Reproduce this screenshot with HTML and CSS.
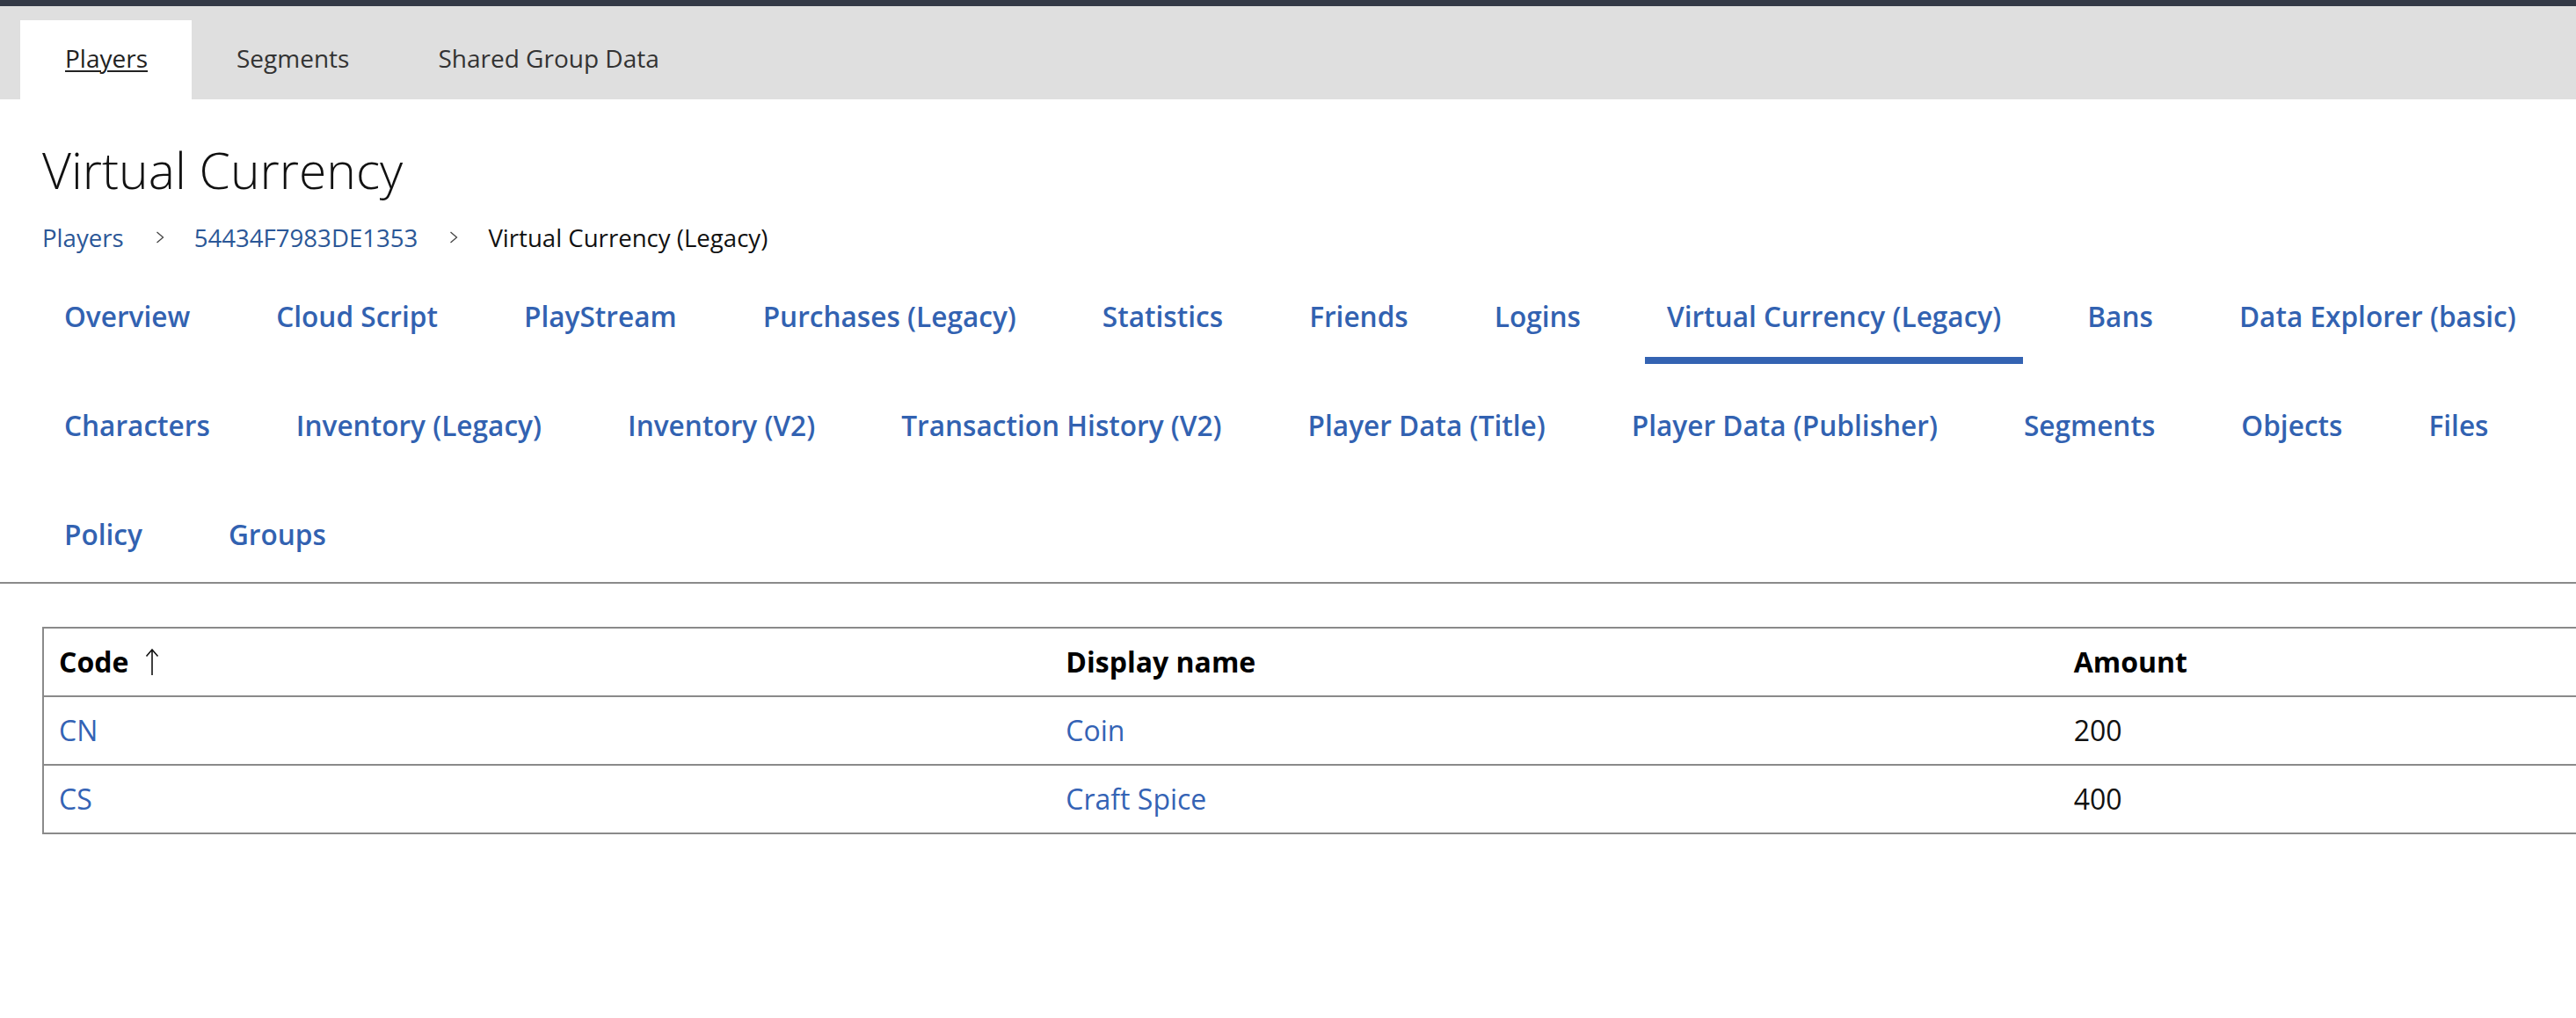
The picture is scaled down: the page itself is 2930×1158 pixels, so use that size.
FILE: index.html
```html
<!DOCTYPE html>
<html lang="en">
<head>
<meta charset="utf-8">
<title>Virtual Currency</title>
<link rel="stylesheet" href="styles.css">
</head>
<body>
  <div class="topbar"></div>
  <nav class="section-tabs">
    <a class="section-tab active" href="#">Players</a>
    <a class="section-tab" href="#">Segments</a>
    <a class="section-tab" href="#">Shared Group Data</a>
  </nav>

  <header class="page-header">
    <h1 class="page-title">Virtual Currency</h1>
    <div class="breadcrumb">
      <a class="crumb-link" href="#">Players</a>
      <svg class="crumb-sep" width="10" height="14" viewBox="0 0 10 14"><polyline points="1.5,1 8.5,7 1.5,13" fill="none" stroke="#444" stroke-width="1.3"/></svg>
      <a class="crumb-link" href="#">54434F7983DE1353</a>
      <svg class="crumb-sep" width="10" height="14" viewBox="0 0 10 14"><polyline points="1.5,1 8.5,7 1.5,13" fill="none" stroke="#444" stroke-width="1.3"/></svg>
      <span class="crumb-current">Virtual Currency (Legacy)</span>
    </div>
  </header>

  <nav class="player-tabs">
    <a class="player-tab" href="#">Overview</a>
    <a class="player-tab" href="#">Cloud Script</a>
    <a class="player-tab" href="#">PlayStream</a>
    <a class="player-tab" href="#">Purchases (Legacy)</a>
    <a class="player-tab" href="#">Statistics</a>
    <a class="player-tab" href="#">Friends</a>
    <a class="player-tab" href="#">Logins</a>
    <a class="player-tab selected" href="#">Virtual Currency (Legacy)</a>
    <a class="player-tab" href="#">Bans</a>
    <a class="player-tab" href="#">Data Explorer (basic)</a>
    <a class="player-tab" href="#">Characters</a>
    <a class="player-tab" href="#">Inventory (Legacy)</a>
    <a class="player-tab" href="#">Inventory (V2)</a>
    <a class="player-tab" href="#">Transaction History (V2)</a>
    <a class="player-tab" href="#">Player Data (Title)</a>
    <a class="player-tab" href="#">Player Data (Publisher)</a>
    <a class="player-tab" href="#">Segments</a>
    <a class="player-tab" href="#">Objects</a>
    <a class="player-tab" href="#">Files</a>
    <a class="player-tab" href="#">Policy</a>
    <a class="player-tab" href="#">Groups</a>
  </nav>

  <div class="table-wrap">
    <table class="currency-table">
      <thead>
        <tr>
          <th><span class="th-inner">Code <svg class="sort-icon" width="16" height="32" viewBox="0 0 16 32"><path d="M8 31V2M1.5 9.5L8 2l6.5 7.5" fill="none" stroke="#111" stroke-width="1.6"/></svg></span></th>
          <th>Display name</th>
          <th>Amount</th>
        </tr>
      </thead>
      <tbody>
        <tr>
          <td><a class="cell-link" href="#">CN</a></td>
          <td><a class="cell-link" href="#">Coin</a></td>
          <td>200</td>
        </tr>
        <tr>
          <td><a class="cell-link" href="#">CS</a></td>
          <td><a class="cell-link" href="#">Craft Spice</a></td>
          <td>400</td>
        </tr>
      </tbody>
    </table>
  </div>
</body>
</html>
```

FILE: styles.css
```css
html, body {
  margin: 0;
  padding: 0;
  background: #ffffff;
}

body {
  font-family: "Open Sans", "Noto Sans", "Liberation Sans", sans-serif;
  color: #111111;
  overflow-x: hidden;
}

a {
  text-decoration: none;
}

.topbar {
  height: 7px;
  background: #343a46;
}

.section-tabs {
  display: flex;
  background: #dfdfdf;
  padding: 16px 0 0 23px;
}

.section-tab {
  display: block;
  padding: 25px 50px 29px 51px;
  font-size: 28px;
  line-height: 36px;
  color: #333333;
}

.section-tab.active {
  background: #ffffff;
  color: #222222;
  text-decoration: underline;
  text-decoration-thickness: 2px;
  text-underline-offset: 3px;
}

.page-header {
  padding: 41px 48px 0 48px;
}

.page-title {
  margin: 0;
  font-size: 57px;
  line-height: 78px;
  font-weight: 300;
  color: #111111;
}

.breadcrumb {
  display: flex;
  align-items: center;
  margin-top: 20px;
  font-size: 27.6px;
  line-height: 36px;
}

.crumb-link {
  color: #2b5797;
}

.crumb-sep {
  margin: 0 34px 0 36px;
}

.crumb-current {
  color: #111111;
}

.player-tabs {
  display: flex;
  flex-wrap: wrap;
  column-gap: 48px;
  row-gap: 24px;
  margin-top: 26px;
  padding: 0 0 0 48px;
  border-bottom: 2px solid #8a8a8a;
}

.player-tab {
  display: block;
  padding: 24px 25px 24px 25px;
  border-bottom: 8px solid transparent;
  font-size: 31.6px;
  line-height: 44px;
  font-weight: 600;
  color: #3262b1;
  white-space: nowrap;
}

.player-tab.selected {
  border-bottom-color: #3463b2;
}

.table-wrap {
  overflow: hidden;
  padding: 49px 0 0 48px;
}

.currency-table {
  border-collapse: collapse;
  width: 3441px;
  table-layout: fixed;
  border: 2px solid #8a8a8a;
  font-size: 32px;
  line-height: 44px;
}

.currency-table th,
.currency-table td {
  padding: 16px 17px;
  text-align: left;
  border-bottom: 2px solid #8a8a8a;
}

.currency-table th {
  font-weight: 700;
  color: #000000;
}

.th-inner {
  display: inline-flex;
  align-items: center;
  gap: 19px;
}

.sort-icon {
  display: block;
}

.cell-link {
  color: #3463b5;
}

.currency-table td {
  color: #111111;
}
```
